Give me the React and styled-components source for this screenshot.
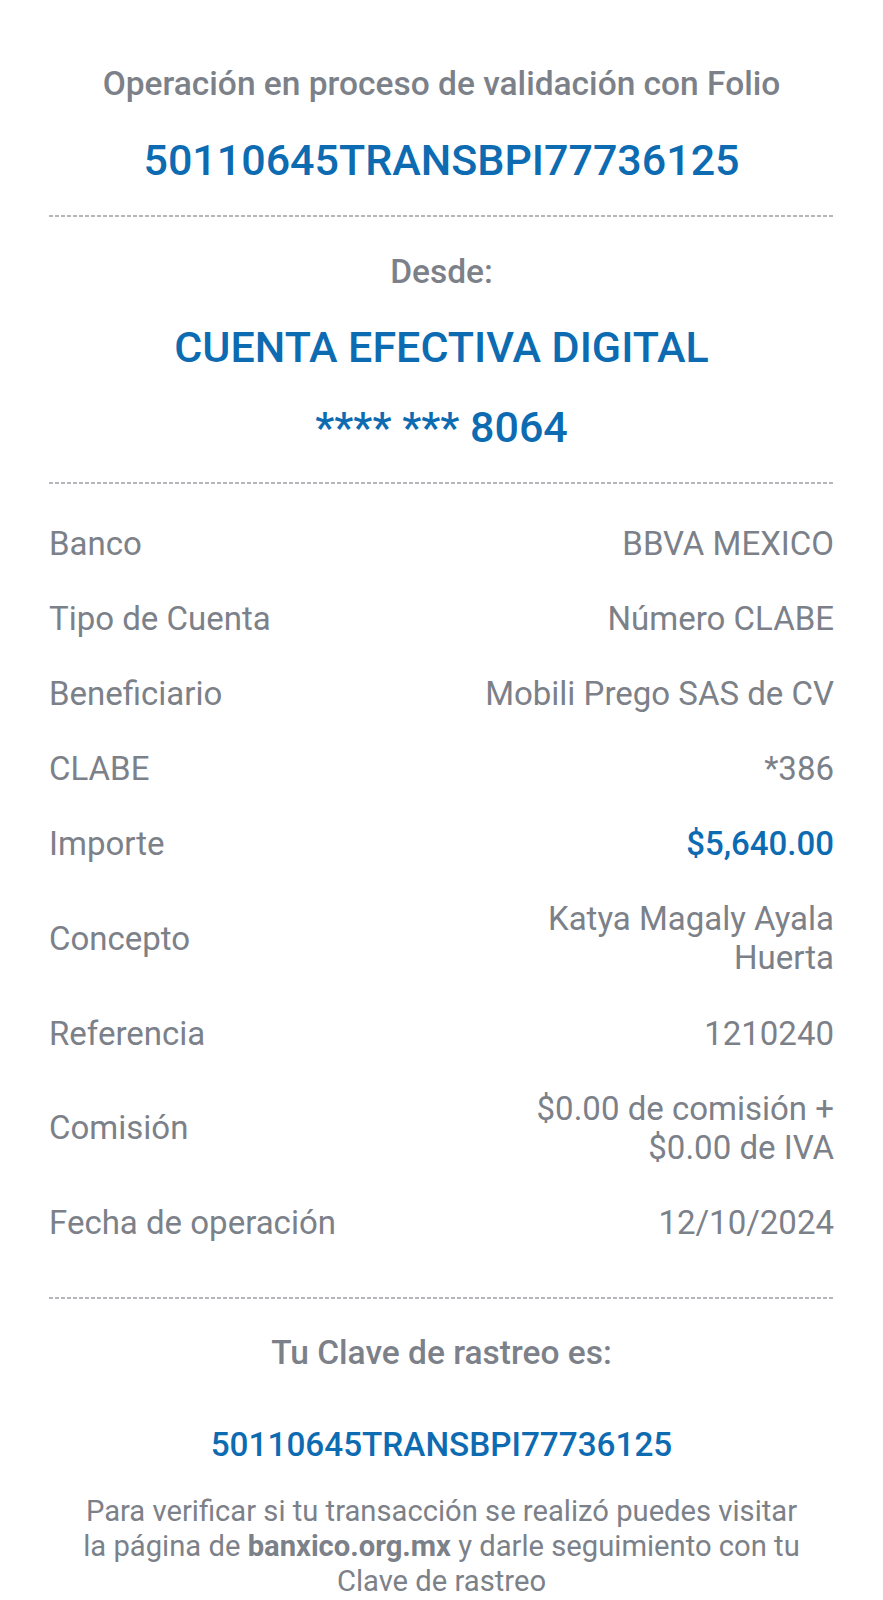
import React from 'react';
import styled, { createGlobalStyle } from 'styled-components';

const GlobalStyle = createGlobalStyle`
  html, body {
    margin: 0;
    padding: 0;
    background: #ffffff;
  }
  body {
    font-family: Roboto, "Noto Sans", "Liberation Sans", sans-serif;
    -webkit-font-smoothing: antialiased;
  }
`;

const BLUE = '#0d6bb2';
const GRAY = '#7c8189';

const Receipt = styled.main`
  display: flex;
  flex-direction: column;
  width: 883px;
  min-height: 1600px;
  box-sizing: border-box;
  padding: 0 49px;
  background: #fff;
`;

const Section = styled.section`
  display: flex;
  flex-direction: column;
  align-items: center;
  text-align: center;
  padding: ${({ $pad }) => $pad || '0'};
  gap: ${({ $gap }) => $gap || '0'};
`;

const Heading = styled.h2`
  margin: 0;
  font-size: 33.5px;
  font-weight: 500;
  color: ${GRAY};
  line-height: 40px;
`;

const Highlight = styled.div`
  font-size: ${({ $size }) => $size || '43px'};
  font-weight: 500;
  color: ${BLUE};
  line-height: ${({ $lh }) => $lh || '50px'};
`;

const Divider = styled.hr`
  width: 100%;
  margin: 0;
  border: none;
  height: 2px;
  background-image: linear-gradient(to right, #b4b6ba 60%, transparent 60%);
  background-size: 6px 2px;
  background-repeat: repeat-x;
`;

const DetailList = styled.dl`
  display: flex;
  flex-direction: column;
  gap: 36.2px;
  margin: 0;
  padding: 39.5px 0 55px;
`;

const Row = styled.div`
  display: flex;
  justify-content: space-between;
  align-items: center;
  gap: 24px;
  font-size: 33px;
  line-height: 39px;
  color: ${GRAY};
`;

const Label = styled.dt`
  margin: 0;
  white-space: nowrap;
`;

const Value = styled.dd`
  margin: 0;
  text-align: right;
  max-width: ${({ $max }) => $max || 'none'};
  color: ${({ $blue }) => ($blue ? BLUE : GRAY)};
  font-weight: ${({ $blue }) => ($blue ? 500 : 400)};
`;

const Note = styled.p`
  margin: 0;
  font-size: 29.2px;
  line-height: 35px;
  color: ${GRAY};

  b {
    font-weight: 700;
  }
`;

const details = [
  { label: 'Banco', value: 'BBVA MEXICO' },
  { label: 'Tipo de Cuenta', value: 'Número CLABE' },
  { label: 'Beneficiario', value: 'Mobili Prego SAS de CV' },
  { label: 'CLABE', value: '*386' },
  { label: 'Importe', value: '$5,640.00', blue: true },
  { label: 'Concepto', value: 'Katya Magaly Ayala Huerta', max: '340px' },
  { label: 'Referencia', value: '1210240' },
  { label: 'Comisión', value: '$0.00 de comisión + $0.00 de IVA', max: '340px' },
  { label: 'Fecha de operación', value: '12/10/2024' },
];

const App = () => (
  <>
    <GlobalStyle />
    <Receipt>
      <Section $pad="64px 0 30px" $gap="31px">
        <Heading>Operación en proceso de validación con Folio</Heading>
        <Highlight>50110645TRANSBPI77736125</Highlight>
      </Section>
      <Divider />
      <Section $pad="35px 0 30px" $gap="30px">
        <Heading>Desde:</Heading>
        <Highlight>CUENTA EFECTIVA DIGITAL</Highlight>
        <Highlight>**** *** 8064</Highlight>
      </Section>
      <Divider />
      <DetailList>
        {details.map((item) => (
          <Row key={item.label}>
            <Label>{item.label}</Label>
            <Value $blue={item.blue} $max={item.max}>
              {item.value}
            </Value>
          </Row>
        ))}
      </DetailList>
      <Divider />
      <Section $pad="34px 0 0" $gap="52px">
        <Heading>Tu Clave de rastreo es:</Heading>
        <Highlight $size="33.3px" $lh="40px">
          50110645TRANSBPI77736125
        </Highlight>
      </Section>
      <Section $pad="29px 0 0">
        <Note>
          Para verificar si tu transacción se realizó puedes visitar
          <br />
          la página de <b>banxico.org.mx</b> y darle seguimiento con tu
          <br />
          Clave de rastreo
        </Note>
      </Section>
    </Receipt>
  </>
);

export default App;
